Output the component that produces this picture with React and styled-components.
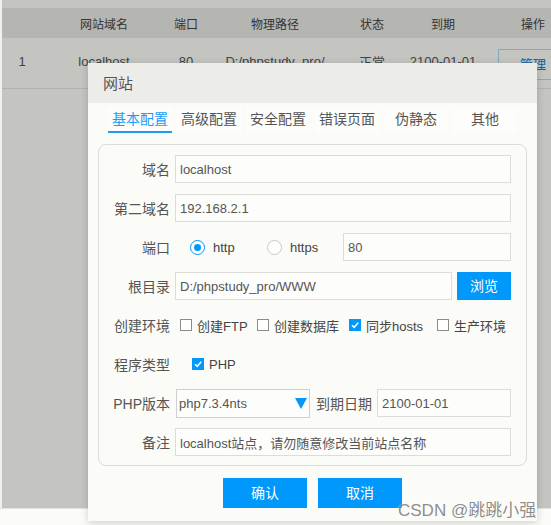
import React from "react";
import styled, { createGlobalStyle } from "styled-components";

const GlobalStyle = createGlobalStyle`
  html, body {
    margin: 0;
    padding: 0;
    background: #fbfbf8;
  }
  body {
    font-family: "Liberation Sans", "Noto Sans CJK SC", sans-serif;
    color: #555;
  }
  * {
    box-sizing: border-box;
  }
`;

const BLUE = "#0098fb";

const columns = [
  { key: "no", title: "", width: 40 },
  { key: "domain", title: "网站域名", width: 124 },
  { key: "port", title: "端口", width: 40 },
  { key: "path", title: "物理路径", width: 138 },
  { key: "state", title: "状态", width: 56 },
  { key: "expire", title: "到期", width: 86 },
  { key: "op", title: "操作", width: 94 },
];

const site = {
  no: "1",
  domain: "localhost",
  port: "80",
  path: "D:/phpstudy_pro/",
  state: "正常",
  expire: "2100-01-01",
};

const tabs = ["基本配置", "高级配置", "安全配置", "错误页面", "伪静态", "其他"];

const envOptions = [
  { label: "创建FTP", checked: false, width: 77 },
  { label: "创建数据库", checked: false, width: 92 },
  { label: "同步hosts", checked: true, width: 88 },
  { label: "生产环境", checked: false },
];

const CheckIcon = () => (
  <svg width="10" height="10" viewBox="0 0 10 10">
    <path d="M2 5.2 L4.2 7.3 L8.2 2.8" fill="none" stroke="#fff" strokeWidth="1.5" />
  </svg>
);

const Check = ({ checked, label, width }) => (
  <CheckOption width={width}>
    <CheckBox checked={checked}>{checked && <CheckIcon />}</CheckBox>
    {label}
  </CheckOption>
);

const App = () => {
  const gridCols = columns.map((c) => c.width + "px").join(" ");

  return (
    <>
      <GlobalStyle />
      <Page>
        <Screen>
          <TopStrip />
          <HeadRow cols={gridCols}>
            {columns.map((c) => (
              <Cell key={c.key}>{c.title}</Cell>
            ))}
          </HeadRow>
          <BodyRow cols={gridCols}>
            {columns.slice(0, 6).map((c) => (
              <Cell key={c.key}>{site[c.key]}</Cell>
            ))}
            <Cell>
              <ManageButton>管理</ManageButton>
            </Cell>
          </BodyRow>
          <Shade />
        </Screen>
        <Footer />

        <Dialog>
          <DialogTitle>网站</DialogTitle>
          <DialogBody>
            <TabBar>
              {tabs.map((t, i) => (
                <Tab key={t} active={i === 0}>
                  {t}
                </Tab>
              ))}
            </TabBar>

            <FormPanel>
              <FormRow>
                <FieldLabel>域名</FieldLabel>
                <TextInput readOnly value="localhost" />
              </FormRow>
              <FormRow>
                <FieldLabel>第二域名</FieldLabel>
                <TextInput readOnly value="192.168.2.1" />
              </FormRow>
              <FormRow>
                <FieldLabel>端口</FieldLabel>
                <RadioGroup>
                  <RadioOption width={77}>
                    <RadioDot selected />
                    http
                  </RadioOption>
                  <RadioOption width={71}>
                    <RadioDot />
                    https
                  </RadioOption>
                </RadioGroup>
                <TextInput readOnly value="80" />
              </FormRow>
              <FormRow>
                <FieldLabel>根目录</FieldLabel>
                <TextInput readOnly value="D:/phpstudy_pro/WWW" />
                <BrowseButton>浏览</BrowseButton>
              </FormRow>
              <FormRow>
                <FieldLabel>创建环境</FieldLabel>
                <CheckGroup indent={5}>
                  {envOptions.map((o) => (
                    <Check key={o.label} {...o} />
                  ))}
                </CheckGroup>
              </FormRow>
              <FormRow>
                <FieldLabel>程序类型</FieldLabel>
                <CheckGroup indent={17}>
                  <Check checked label="PHP" />
                </CheckGroup>
              </FormRow>
              <FormRow>
                <FieldLabel>PHP版本</FieldLabel>
                <SelectBox>
                  php7.3.4nts
                  <svg width="12" height="11" viewBox="0 0 12 11">
                    <path d="M0 0 H12 L6 11 Z" fill={BLUE} />
                  </svg>
                </SelectBox>
                <InlineLabel>到期日期</InlineLabel>
                <TextInput readOnly value="2100-01-01" />
              </FormRow>
              <FormRow>
                <FieldLabel>备注</FieldLabel>
                <TextInput readOnly value="localhost站点，请勿随意修改当前站点名称" />
              </FormRow>
            </FormPanel>

            <ButtonBar>
              <PrimaryButton>确认</PrimaryButton>
              <PrimaryButton>取消</PrimaryButton>
            </ButtonBar>
          </DialogBody>
        </Dialog>

        <Watermark>CSDN @跳跳小强</Watermark>
      </Page>
    </>
  );
};

export default App;

const Page = styled.div`
  position: relative;
  width: 551px;
  height: 525px;
  overflow: hidden;
`;

const Screen = styled.div`
  position: relative;
  height: 508px;
  background: #fbfbf8;
  border-left: 2px solid #f1f1ee;
  overflow: hidden;
`;

const TopStrip = styled.div`
  height: 8px;
  background: #fcfcf9;
`;

const HeadRow = styled.div`
  display: grid;
  grid-template-columns: ${(p) => p.cols};
  align-items: center;
  height: 30px;
  background: #e8e8e5;
  font-size: 12px;
  color: #444;
`;

const BodyRow = styled(HeadRow)`
  height: 51px;
  padding-bottom: 4px;
  background: #fbfbf8;
  border-bottom: 1px solid #e4e4e0;
  color: #555;
  font-size: 13px;
`;

const Cell = styled.div`
  text-align: center;
  white-space: nowrap;
`;

const ManageButton = styled.div`
  width: 70px;
  height: 31px;
  margin: 6px 0 0 12px;
  line-height: 29px;
  border: 1px solid #a8d6f4;
  color: #0a80d8;
  font-size: 13px;
  text-align: center;
`;

const Shade = styled.div`
  position: absolute;
  inset: 0;
  background: rgba(0, 0, 0, 0.22);
`;

const Footer = styled.div`
  height: 17px;
  border-top: 1px solid #e2e2df;
  background: #fbfbf8;
`;

const Dialog = styled.div`
  position: absolute;
  left: 88px;
  top: 63px;
  width: 449px;
  height: 458px;
  background: #fbfbf7;
  box-shadow: 0 2px 8px rgba(0, 0, 0, 0.18);
`;

const DialogTitle = styled.div`
  height: 40px;
  padding-left: 15px;
  line-height: 42px;
  background: #ecece8;
  font-size: 15px;
  color: #555;
`;

const DialogBody = styled.div`
  padding: 5px 10px 12px;
`;

const TabBar = styled.div`
  display: flex;
  gap: 5px;
  padding-left: 10px;
  margin-bottom: 11px;
`;

const Tab = styled.div`
  width: 64px;
  height: 25px;
  line-height: 23px;
  text-align: center;
  font-size: 14px;
  background: #fdfdfb;
  color: ${(p) => (p.active ? "#1c9cf6" : "#555")};
  border-bottom: 2px solid ${(p) => (p.active ? "#1c9cf6" : "transparent")};
`;

const FormPanel = styled.div`
  display: flex;
  flex-direction: column;
  gap: 11px;
  padding: 10px 15px 9px 0;
  border: 1px solid #dddcd8;
  border-radius: 8px;
`;

const FormRow = styled.div`
  display: flex;
  align-items: center;
  gap: 5px;
  height: 28px;
`;

const FieldLabel = styled.div`
  flex: 0 0 71px;
  text-align: right;
  font-size: 14px;
  color: #555;
  white-space: nowrap;
`;

const InlineLabel = styled.div`
  flex: none;
  padding-left: 1px;
  font-size: 14px;
  color: #555;
`;

const TextInput = styled.input`
  flex: 1;
  min-width: 0;
  height: 28px;
  padding: 0 4px;
  border: 1px solid #dcdcd8;
  background: #fdfdfb;
  font-family: inherit;
  font-size: 13px;
  color: #555;
  outline: none;
`;

const BrowseButton = styled.div`
  flex: 0 0 54px;
  height: 28px;
  line-height: 28px;
  text-align: center;
  background: ${BLUE};
  color: #fff;
  font-size: 14px;
`;

const RadioGroup = styled.div`
  display: flex;
  padding-left: 15px;
`;

const RadioOption = styled.div`
  display: flex;
  align-items: center;
  gap: 8px;
  width: ${(p) => p.width}px;
  font-size: 13px;
  color: #444;
`;

const RadioDot = styled.span`
  position: relative;
  width: 15px;
  height: 15px;
  border-radius: 50%;
  border: 1px solid ${(p) => (p.selected ? BLUE : "#c8c8c4")};
  background: #fff;

  &::after {
    content: "";
    display: ${(p) => (p.selected ? "block" : "none")};
    position: absolute;
    left: 3px;
    top: 3px;
    width: 7px;
    height: 7px;
    border-radius: 50%;
    background: ${BLUE};
  }
`;

const CheckGroup = styled.div`
  display: flex;
  padding-left: ${(p) => p.indent}px;
`;

const CheckOption = styled.div`
  display: flex;
  align-items: center;
  gap: 5px;
  width: ${(p) => (p.width ? p.width + "px" : "auto")};
  font-size: 13px;
  color: #444;
  white-space: nowrap;
`;

const CheckBox = styled.span`
  display: flex;
  align-items: center;
  justify-content: center;
  width: 12px;
  height: 12px;
  border: 1px solid ${(p) => (p.checked ? BLUE : "#8c8c8a")};
  background: ${(p) => (p.checked ? BLUE : "#fff")};
`;

const SelectBox = styled.div`
  display: flex;
  align-items: center;
  justify-content: space-between;
  flex: 0 0 134px;
  height: 29px;
  margin-left: 1px;
  padding: 0 2px 0 2px;
  border: 1px solid #cfcfcb;
  background: #fdfdfb;
  font-size: 13px;
  color: #555;
`;

const ButtonBar = styled.div`
  display: flex;
  justify-content: center;
  gap: 11px;
  margin-top: 12px;
`;

const PrimaryButton = styled.div`
  width: 84px;
  height: 30px;
  line-height: 30px;
  text-align: center;
  background: ${BLUE};
  color: #fff;
  font-size: 14px;
`;

const Watermark = styled.div`
  position: absolute;
  left: 398px;
  top: 496px;
  font-family: "Liberation Sans", "Noto Sans CJK SC", sans-serif;
  font-size: 17px;
  color: rgba(110, 110, 110, 0.8);
  text-shadow: 0 0 2px rgba(255, 255, 255, 0.9);
  white-space: nowrap;
`;
